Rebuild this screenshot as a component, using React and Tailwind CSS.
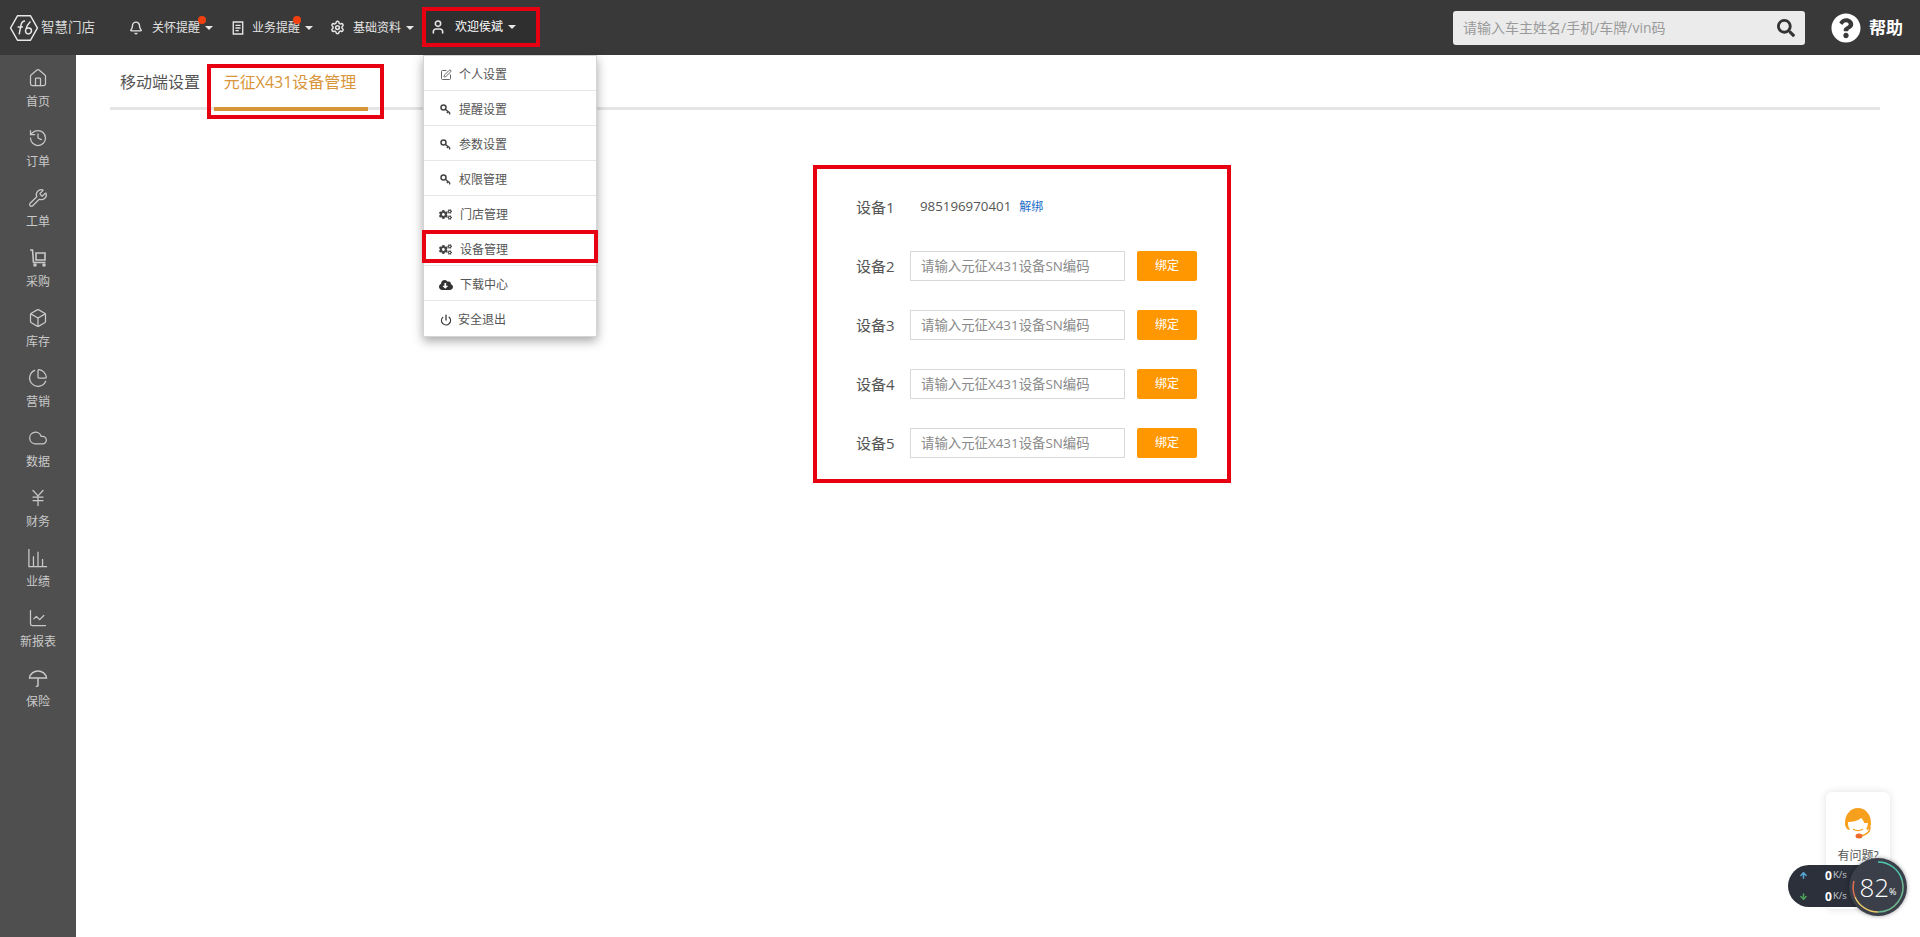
import React from 'react'
import { Bell, Settings, User, History, Wrench, Box, PieChart, Cloud, JapaneseYen, ChartLine, Power, SquarePen, Home, ArrowUp, ArrowDown } from 'lucide-react'
import { FaCogs, FaCloudDownloadAlt, FaQuestionCircle, FaSearch } from 'react-icons/fa'

const CartIcon = ({ className }) => (
  <svg className={className} viewBox="0 0 20 20" fill="none" stroke="currentColor" strokeWidth="1.6">
    <path d="M2 2h2.5l1 12.5h12" />
    <path d="M8 5h9v7H8z" />
    <circle cx="7" cy="17" r="1" />
    <circle cx="16" cy="17" r="1" />
  </svg>
)

const BarsIcon = ({ className }) => (
  <svg className={className} viewBox="0 0 22 22" fill="none" stroke="currentColor" strokeWidth="1.4">
    <path d="M1 1v19.5h20" />
    <path d="M6 20V9M11 20V4M16 20v-8" />
  </svg>
)

const DocIcon = ({ className }) => (
  <svg className={className} viewBox="0 0 14 16" fill="none" stroke="currentColor" strokeWidth="1.6">
    <path d="M1.500 1h11v14h-11z" />
    <path d="M4 5h6M4 8h6M4 11h4" />
  </svg>
)

const KeyIcon = () => (
  <svg className="h-[11px] w-[11px] text-[#444]" viewBox="0 0 11 11" fill="none" stroke="currentColor" strokeWidth="1.500">
    <circle cx="3.500" cy="3.500" r="2.500" />
    <path d="M5.500 5.500l4.500 3.500M8 7.300L7 9M10 9L9.300 10.300" />
  </svg>
)

const LogoIcon = () => (
  <svg className="h-[30px] w-[30px]" viewBox="0 0 28 28" fill="none" stroke="#e8e8e8" strokeWidth="1.4">
    <path d="M8 2.500h12L26.500 14 20 25.500H8L1.500 14z" />
    <path d="M15 7.500c-3 0-3.500 2-4 4.500l-1.500 8M8 13h5" />
    <path d="M20 8c-2 2-4 5-4.500 8-.4 2.500 1 3.500 2.500 3.500s3-1.300 3-3-1.500-2.500-3-2.500-2 .5-2.500 1" />
  </svg>
)

const UmbrellaIcon = ({ className }) => (
  <svg className={className} viewBox="0 0 20 20" fill="none" stroke="currentColor" strokeWidth="1.500">
    <path d="M1.500 10C2 5.500 6 3 10 3s8 2.500 8.500 7z" />
    <path d="M10 10v7.500c0 1-1.500 1-2 .5" />
  </svg>
)

const Caret = () => (
  <span className="ml-[5px] inline-block h-0 w-0 border-x-[4px] border-t-[4px] border-x-transparent border-t-[#e8e8e8]" />
)

const Dot = ({ className }) => (
  <span className={`absolute h-[8px] w-[8px] rounded-full bg-[#f0400f] ${className}`} />
)

const menuItems = [
  { icon: Home, label: '首页' },
  { icon: History, label: '订单' },
  { icon: Wrench, label: '工单' },
  { icon: CartIcon, label: '采购' },
  { icon: Box, label: '库存' },
  { icon: PieChart, label: '营销' },
  { icon: Cloud, label: '数据' },
  { icon: JapaneseYen, label: '财务' },
  { icon: BarsIcon, label: '业绩' },
  { icon: ChartLine, label: '新报表' },
  { icon: UmbrellaIcon, label: '保险' },
]

const dropdown = [
  { icon: <SquarePen className="h-[12px] w-[12px] text-[#666]" />, label: '个人设置' },
  { icon: <KeyIcon />, label: '提醒设置' },
  { icon: <KeyIcon />, label: '参数设置' },
  { icon: <KeyIcon />, label: '权限管理' },
  { icon: <FaCogs className="h-[13px] w-[13px] text-[#444]" />, label: '门店管理' },
  { icon: <FaCogs className="h-[13px] w-[13px] text-[#444]" />, label: '设备管理', marked: true },
  { icon: <FaCloudDownloadAlt className="h-[14px] w-[14px] text-[#333]" />, label: '下载中心' },
  { icon: <Power className="h-[12px] w-[12px] text-[#333]" strokeWidth={2.5} />, label: '安全退出' },
]

function Header() {
  return (
    <header className="flex h-[55px] shrink-0 items-center bg-[#393939] text-[12px] text-[#e4e4e4]">
      <div className="ml-[9px] flex w-[118px] items-center gap-[2px]">
        <LogoIcon />
        <span className="text-[13.500px] text-[#d8d8d8]">智慧门店</span>
      </div>
      <div className="relative flex w-[100px] items-center pl-[2px]">
        <Bell className="mr-[9px] h-[14px] w-[14px]" strokeWidth={2.4} />
        <span>关怀提醒</span>
        <Caret />
        <Dot className="left-[71px] -top-[3px]" />
      </div>
      <div className="relative flex w-[102px] items-center pl-[5px]">
        <DocIcon className="mr-[8px] h-[14px] w-[12px]" />
        <span>业务提醒</span>
        <Caret />
        <Dot className="left-[66px] -top-[3px]" />
      </div>
      <div className="flex w-[93px] items-center pl-[1px]">
        <Settings className="mr-[8px] h-[15px] w-[15px]" strokeWidth={2.4} />
        <span>基础资料</span>
        <Caret />
      </div>
      <div className="relative mt-[7px] flex h-[40px] w-[118px] items-center self-start bg-[#2f2f2f] pl-[8px]">
        <div className="pointer-events-none absolute inset-0 z-20 border-[4px] border-[#e60012]" />
        <User className="mr-[9px] h-[16px] w-[16px]" strokeWidth={2.4} />
        <span className="text-white">欢迎侯斌</span>
        <Caret />
        <div className="absolute left-[1px] top-[48px] z-10 w-[174px] border border-[#d4d4d4] bg-white shadow-[0_4px_10px_rgba(0,0,0,0.35)]">
          {dropdown.map((item, i) => (
            <div
              key={item.label}
              className={`relative flex h-[35px] items-center pt-[3px] text-[12px] text-[#555] ${i < 7 ? 'border-b border-[#e6e6e6]' : ''}`}
            >
              <span className="flex w-[35px] justify-center pl-[8px]">{item.icon}</span>
              <span className={i === 7 ? '-ml-px' : i > 3 ? 'ml-[1px]' : ''}>{item.label}</span>
              {item.marked && <div className="absolute -left-[2px] -right-[2px] -top-px bottom-[2px] border-[4px] border-[#e60012]" />}
            </div>
          ))}
        </div>
      </div>
      <div className="ml-auto flex h-[34px] w-[352px] items-center justify-between rounded-[3px] bg-[#ebebeb] pl-[10px] pr-[10px]">
        <span className="text-[14px] text-[#9a9a9a]">请输入车主姓名/手机/车牌/vin码</span>
        <FaSearch className="h-[18px] w-[18px] text-[#333]" />
      </div>
      <div className="ml-[26px] mr-[17px] flex items-center gap-[8px]">
        <FaQuestionCircle className="h-[30px] w-[30px] text-white" />
        <span className="text-[17px] font-bold text-white">帮助</span>
      </div>
    </header>
  )
}

function Sidebar() {
  return (
    <aside className="w-[76px] shrink-0 bg-[#4f4f4f] pt-[7px] text-[#c9c9c9]">
      {menuItems.map(({ icon: Icon, label }) => (
        <div key={label} className="flex h-[60px] flex-col items-center pt-[6px]">
          <Icon className="h-[20px] w-[20px]" strokeWidth={1.5} />
          <span className="mt-[6px] text-[12px] leading-[16px]">{label}</span>
        </div>
      ))}
    </aside>
  )
}

function Tabs() {
  return (
    <div className="flex h-[55px] items-start border-b-[3px] border-[#e5e5e5] pl-[10px]">
      <div className="pt-[15px] text-[16px] leading-[24px] text-[#555]">移动端设置</div>
      <div className="relative -mb-[3px] ml-[14px] h-[56px] w-[154px] border-b-[4px] border-[#d8953a] pr-[2px] pt-[15px] text-center text-[16px] leading-[24px] text-[#d8953a]">
        元征X431设备管理
        <div className="absolute -bottom-[12px] -left-[7px] -right-[16px] top-[9px] border-[4px] border-[#e60012]" />
      </div>
    </div>
  )
}

function DeviceRow({ name }) {
  return (
    <div className="flex h-[30px] items-center">
      <span className="w-[54px] text-[15px] text-[#555]">{name}</span>
      <div className="flex h-[30px] w-[215px] items-center border border-[#d8d8d8] px-[10px] text-[13.400px] text-[#8a8a8a]">
        请输入元征X431设备SN编码
      </div>
      <button className="ml-[12px] h-[30px] w-[60px] rounded-[2px] bg-[#ff9800] text-[12px] text-white">绑定</button>
    </div>
  )
}

function DevicePanel() {
  return (
    <div className="ml-[703px] mt-[55px] flex h-[318px] w-[418px] flex-col gap-[29px] border-[4px] border-[#e60012] pl-[39px] pt-[23px]">
      <div className="flex h-[30px] items-center">
        <span className="w-[64px] text-[15px] text-[#555]">设备1</span>
        <span className="text-[13.300px] text-[#555]">985196970401</span>
        <span className="ml-[8px] text-[12px] text-[#1a6fc9]">解绑</span>
      </div>
      {['设备2', '设备3', '设备4', '设备5'].map((name) => (
        <DeviceRow key={name} name={name} />
      ))}
    </div>
  )
}

function SpeedRow({ icon: Icon, color }) {
  return (
    <div className="flex h-[21px] items-center pl-[11px] text-[#c8ccd2]">
      <Icon className={`h-[9px] w-[9px] ${color}`} strokeWidth={4} />
      <span className="ml-[17px] text-[12px] font-bold text-white">0</span>
      <span className="ml-[1px] text-[9.500px]">K/s</span>
    </div>
  )
}

function Floaters() {
  return (
    <>
      <div className="absolute bottom-[28px] right-[30px] flex h-[117px] w-[64px] flex-col items-center rounded-[6px] bg-white pt-[14px] shadow-[0_0_8px_rgba(0,0,0,0.12)]">
        <svg className="h-[34px] w-[34px]" viewBox="0 0 34 34" fill="none">
          <path d="M4 17C4 8 10 2 17 2s13 6 13 15c0 5-3 7-4 7C24 18 22 13 20 12c-3 3-9 4-13 4 0 3 1 6 2 8-3 0-5-3-5-7z" fill="#f7a01e" />
          <path d="M7 17a10 10 0 0 0 20 0" fill="#fff" />
          <path d="M12 23c3 2 7 2 10 0" stroke="#f7a01e" strokeWidth="1.300" />
          <path d="M29 21c0 6-4 8-9 9" stroke="#f7a01e" strokeWidth="1.500" />
          <ellipse cx="18" cy="30" rx="3.500" ry="2.500" fill="#ee6a2a" />
        </svg>
        <span className="mt-[7px] text-[12px] text-[#555]">有问题?</span>
      </div>
      <div className="absolute bottom-[30px] right-[30px] h-[42px] w-[102px] rounded-l-full bg-[#2b303b]">
        <SpeedRow icon={ArrowUp} color="text-[#58a6d8]" />
        <SpeedRow icon={ArrowDown} color="text-[#4ea35c]" />
      </div>
      <div className="absolute bottom-[21px] right-[13px] flex h-[58px] w-[58px] items-center justify-center rounded-full bg-[#3a3f49] shadow-[0_0_4px_rgba(0,0,0,0.4)]">
        <svg className="absolute inset-0 h-[58px] w-[58px]" viewBox="0 0 58 58" fill="none" strokeWidth="1.500">
          <path d="M29 4a25 25 0 0 1 24 18" stroke="#4fc9b0" />
          <path d="M53 22a25 25 0 0 1-24 32" stroke="#6fb98f" />
          <path d="M29 54a25 25 0 0 1-23-15" stroke="#e8c76a" />
          <path d="M6 39a25 25 0 0 1-1-16" stroke="#e0704f" />
        </svg>
        <span className="text-[26px] font-light leading-none text-white">82</span>
        <span className="mt-[8px] text-[9px] leading-none text-white">%</span>
      </div>
    </>
  )
}

export default function App() {
  return (
    <div className="relative flex h-[937px] w-[1920px] flex-col overflow-hidden bg-white font-['Open_Sans','Noto_Sans_CJK_SC',sans-serif]">
      <Header />
      <div className="flex flex-1">
        <Sidebar />
        <main className="flex-1 pl-[34px] pr-[40px]">
          <Tabs />
          <DevicePanel />
        </main>
      </div>
      <Floaters />
    </div>
  )
}
